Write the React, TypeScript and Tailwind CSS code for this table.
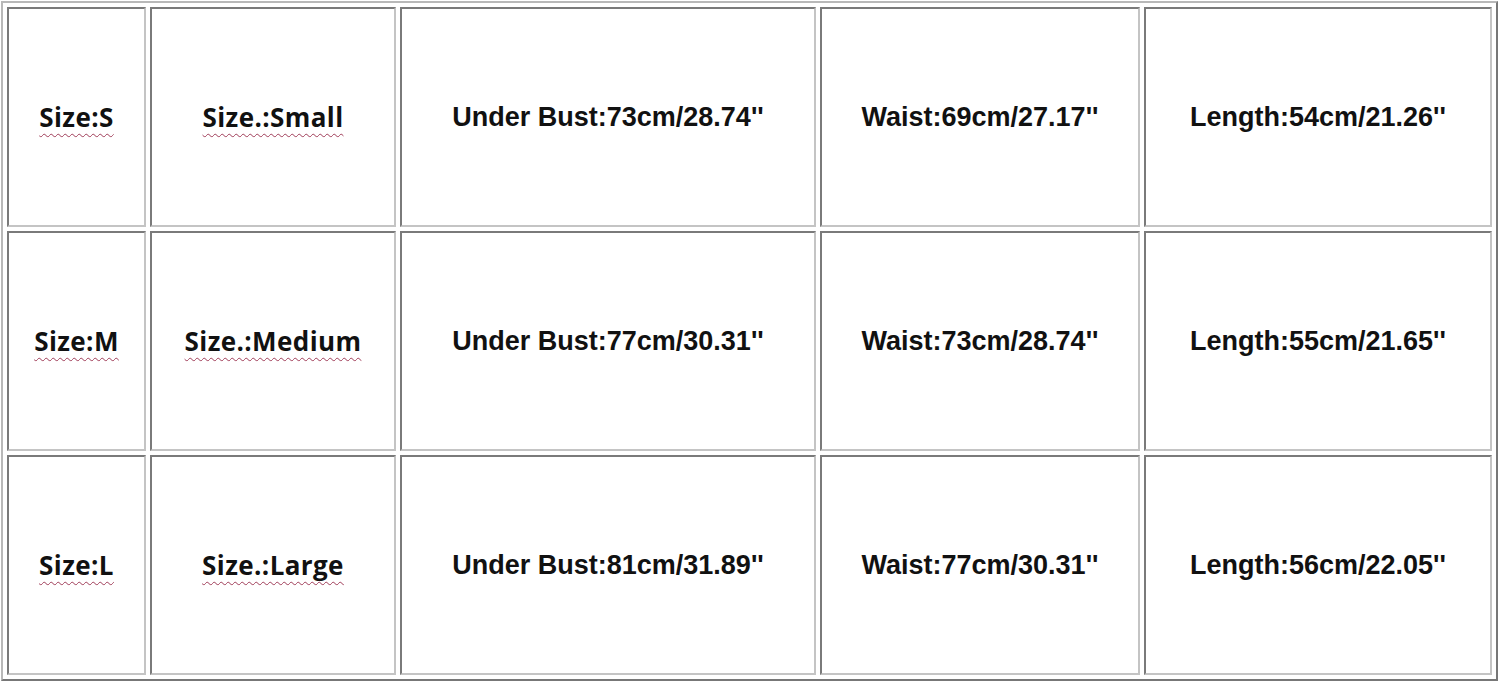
const rows = [
  {
    size: 'Size:S',
    name: 'Size.:Small',
    bust: "Under Bust:73cm/28.74''",
    waist: "Waist:69cm/27.17''",
    length: "Length:54cm/21.26''",
  },
  {
    size: 'Size:M',
    name: 'Size.:Medium',
    bust: "Under Bust:77cm/30.31''",
    waist: "Waist:73cm/28.74''",
    length: "Length:55cm/21.65''",
  },
  {
    size: 'Size:L',
    name: 'Size.:Large',
    bust: "Under Bust:81cm/31.89''",
    waist: "Waist:77cm/30.31''",
    length: "Length:56cm/22.05''",
  },
];

const cell =
  'flex items-center justify-center border-2 border-t-[#7a7a7a] border-l-[#7a7a7a] border-b-[#c4c4c4] border-r-[#c4c4c4] bg-white';

// first two columns carry the spell-check squiggle
const spell =
  "font-['Open_Sans',sans-serif] font-bold text-[26px] tracking-[0.4px] text-[#111] underline decoration-wavy decoration-[#a03c58] decoration-1 underline-offset-[6px] [text-decoration-skip-ink:none]";

const plain = "font-['Liberation_Sans',Arial,sans-serif] font-bold text-[27px] text-[#111]";

export default function App() {
  return (
    <div className="w-[1500px] h-[683px] bg-white p-[1px]">
      {/* size chart table */}
      <div className="w-[1497px] h-[680px] border-2 border-t-[#b8b8b8] border-l-[#b8b8b8] border-b-[#777] border-r-[#777] p-1 grid grid-cols-[139px_246px_416px_320px_348px] grid-rows-3 gap-1">
        {rows.map((r) => (
          <div key={r.size} className="contents">
            <div className={cell}>
              <span className={spell}>{r.size}</span>
            </div>
            <div className={cell}>
              <span className={spell}>{r.name}</span>
            </div>
            <div className={cell}>
              <span className={plain}>{r.bust}</span>
            </div>
            <div className={cell}>
              <span className={plain}>{r.waist}</span>
            </div>
            <div className={cell}>
              <span className={plain}>{r.length}</span>
            </div>
          </div>
        ))}
      </div>
    </div>
  );
}
